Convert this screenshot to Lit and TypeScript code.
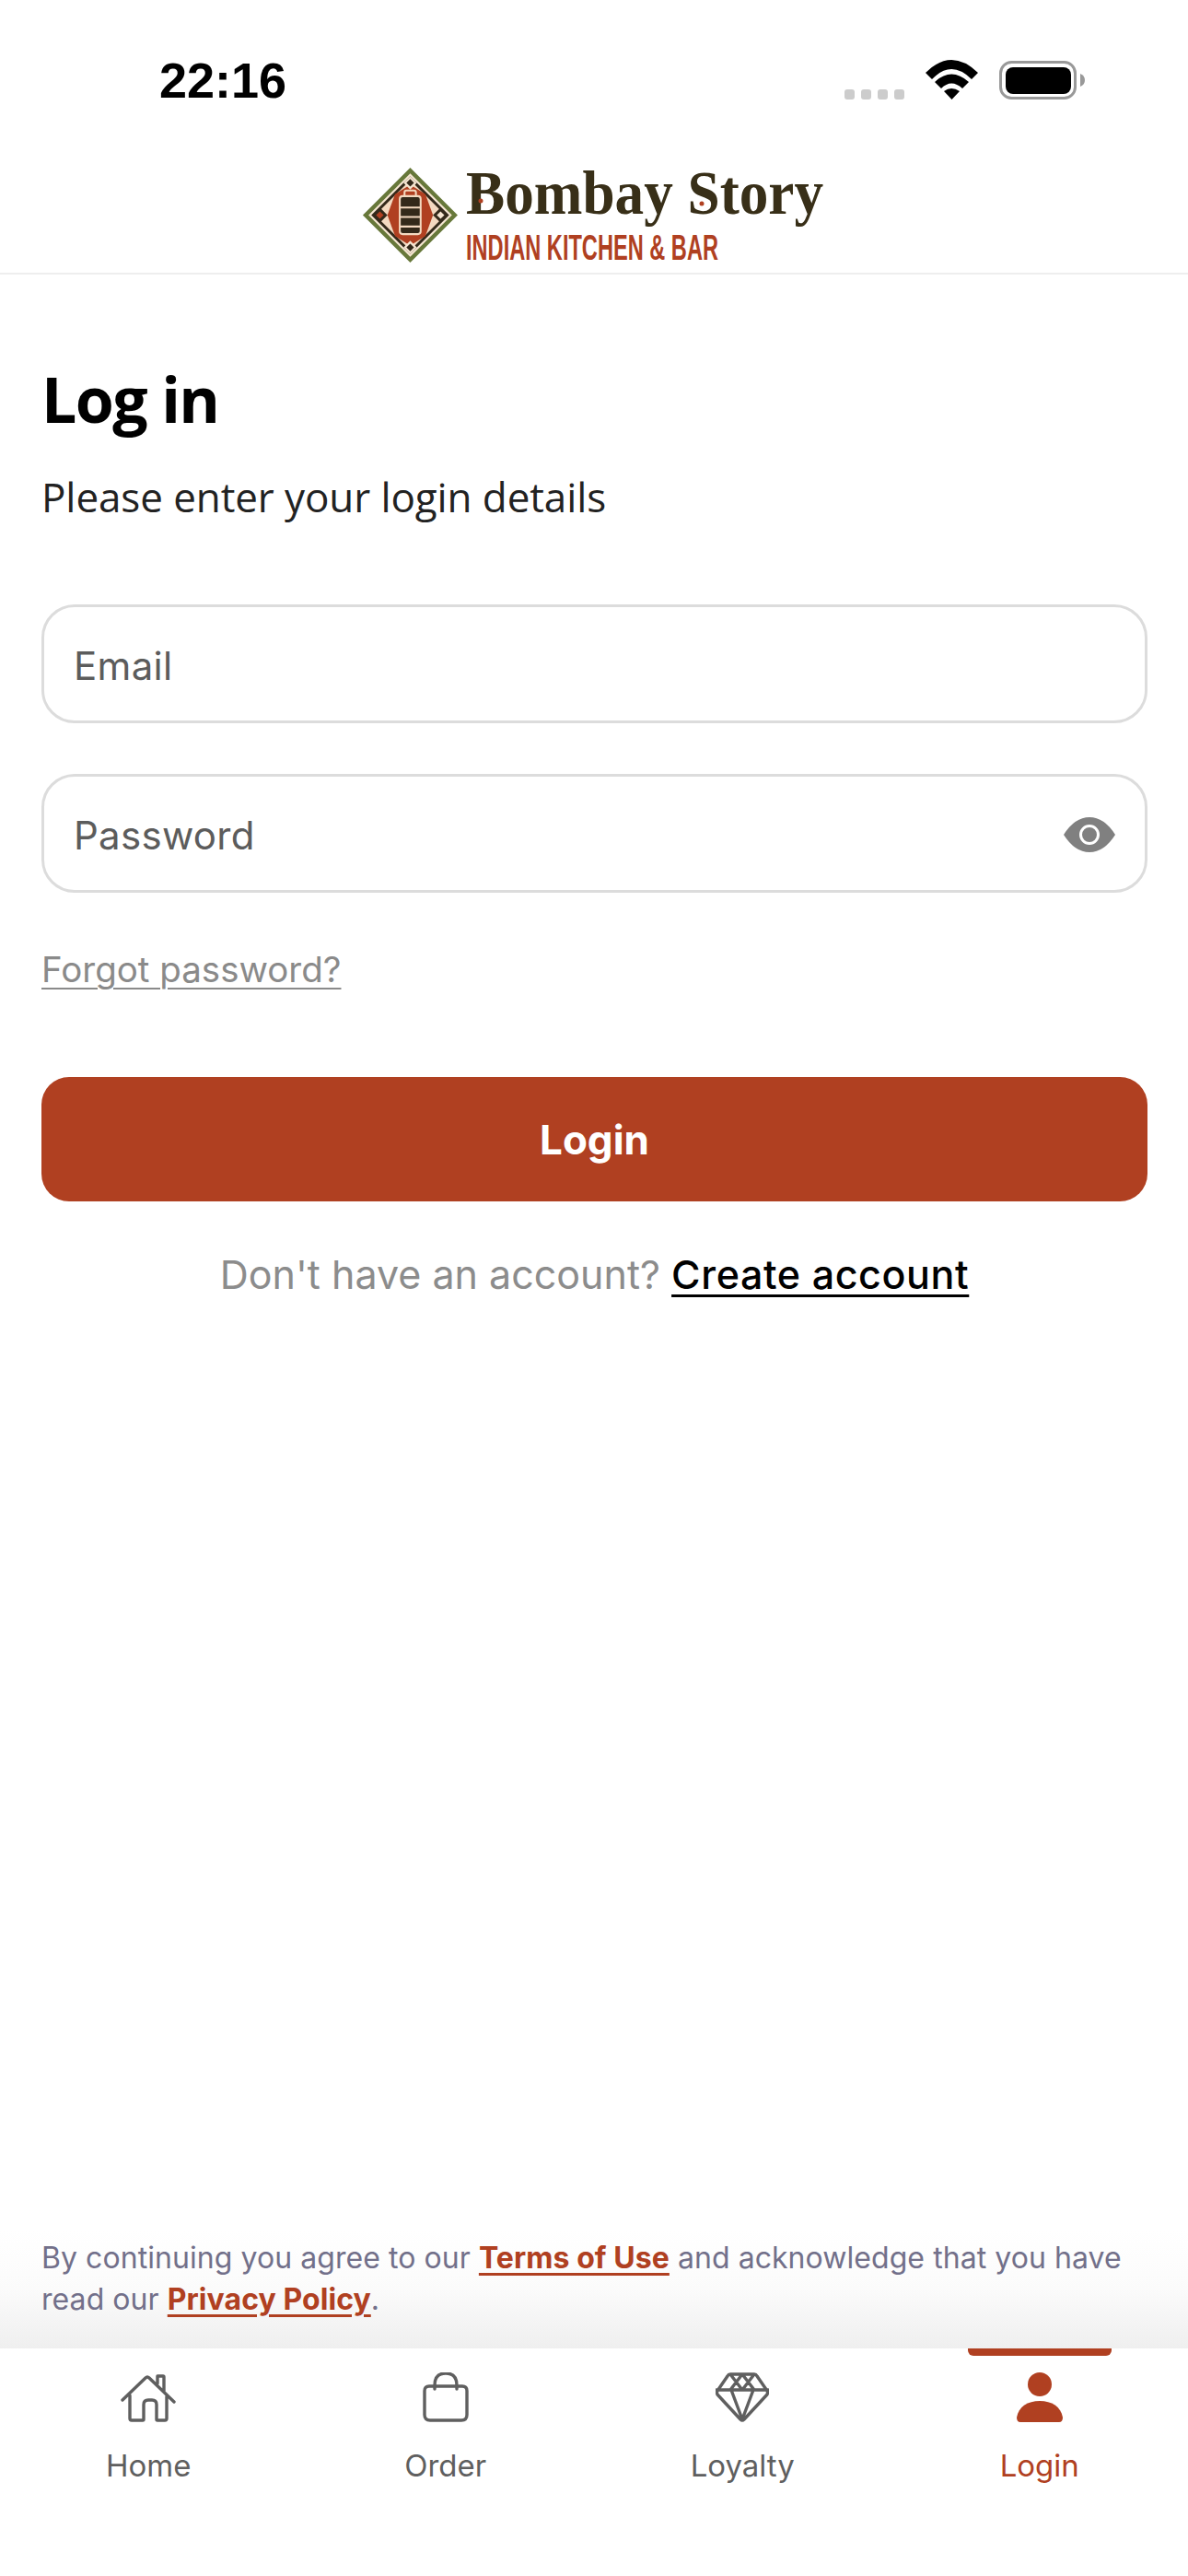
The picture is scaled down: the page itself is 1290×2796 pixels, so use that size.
import { LitElement, html, css, svg } from 'lit';
import { customElement } from 'lit/decorators.js';

const diamond = (r: number, fill: string, cx = 48, cy = 50) =>
  svg`<polygon points="${cx},${cy - r} ${cx + r},${cy} ${cx},${cy + r} ${cx - r},${cy}" fill="${fill}" />`;

const navIcons = {
  home: svg`<path d="M2 30 27 6q2-2 4 0l27 26M10 25v25q0 2 2 2h12q1 0 1-1V35q0-5 5-5h4q5 0 5 5v16q0 1 1 1h8q2 0 2-2V26M40 12V4h6q1 0 1 1v15" />`,
  bag: svg`<path d="M8 15h36q5 0 5 5v26q0 6-6 6H9q-6 0-6-6V20q0-5 5-5ZM14 18v-4Q14 1 26 1t12 13v4" />`,
  gem: svg`<path d="M16 2h26q2 0 3 2l11 16q1 2 0 4L31 51q-2 2-4 0L2 24q-1-2 0-4L13 4q1-2 3-2ZM1 19h56M17 19l12 32 12-32M16 2l13 17L42 2M29 2 16 19M29 2l13 17" />`,
};

@customElement('app-root')
export class AppRoot extends LitElement {
  static styles = css`
    :host {
      display: flex;
      flex-direction: column;
      width: 1290px;
      height: 2796px;
      background: #fff;
      font-family: Inter, 'Noto Sans', sans-serif;
      color: #000;
    }

    .status {
      height: 160px;
      flex: none;
      display: flex;
      justify-content: space-between;
      align-items: flex-start;
      padding: 55px 112px 0 173px;
      box-sizing: border-box;
    }

    .time {
      font: 700 54px/64px 'Liberation Sans', sans-serif;
    }

    .status-icons {
      margin-top: 10px;
      display: block;
    }

    .brand {
      height: 138px;
      flex: none;
      box-sizing: border-box;
      border-bottom: 2px solid #eeeeee;
    }

    .brand svg {
      display: block;
    }

    main {
      flex: 1;
      display: flex;
      flex-direction: column;
      padding: 0 44px 0 45px;
    }

    h1 {
      margin: 95px 0 0;
      font: 700 68px/80px 'Open Sans', sans-serif;
      letter-spacing: -1.6px;
    }

    .lead {
      margin: 38px 0 0;
      font: 400 44px/56px 'Open Sans', sans-serif;
      letter-spacing: -0.1px;
      color: #222;
    }

    .fields {
      margin-top: 89px;
      display: flex;
      flex-direction: column;
      gap: 55px;
    }

    .field {
      height: 129px;
      box-sizing: border-box;
      border: 3px solid #dcdcdc;
      border-radius: 36px;
      display: flex;
      justify-content: space-between;
      align-items: center;
      padding: 3px 32px 0;
      font-size: 42px;
      letter-spacing: 0.3px;
      color: #5c5c5c;
    }

    .forgot {
      margin-top: 60px;
      font-size: 38.5px;
      line-height: 46px;
      color: #8a8a8a;
      text-decoration: underline;
      text-underline-offset: 6px;
      text-decoration-thickness: 2px;
    }

    .login {
      margin-top: 94px;
      height: 135px;
      border-radius: 30px;
      background: #b04021;
      color: #fff;
      display: flex;
      align-items: center;
      justify-content: center;
      font-size: 44px;
      font-weight: 700;
    }

    .signup {
      margin-top: 50px;
      text-align: center;
      font-size: 43px;
      line-height: 58px;
      color: #8c8c8c;
    }

    .signup a {
      color: #000;
      font-weight: 500;
      letter-spacing: 0.6px;
      text-decoration: underline;
      text-underline-offset: 6px;
      text-decoration-thickness: 3px;
    }

    .terms {
      height: 129px;
      flex: none;
      box-sizing: border-box;
      padding: 8px 45px 0;
      background: linear-gradient(#fff 0%, #fbfbfb 50%, #efefef 100%);
      font-size: 32px;
      letter-spacing: 0.06px;
      line-height: 45px;
      color: #72708a;
    }

    .terms a {
      color: #b04021;
      font-weight: 700;
      text-decoration: underline;
      text-underline-offset: 5px;
      text-decoration-thickness: 3px;
    }

    nav {
      height: 247px;
      flex: none;
      display: grid;
      grid-template-columns: repeat(4, 1fr);
    }

    .tab {
      position: relative;
      display: flex;
      flex-direction: column;
      align-items: center;
      padding-top: 26px;
      font-size: 33px;
      line-height: 40px;
      color: #5f5f5f;
    }

    .tab svg {
      display: block;
      height: 54px;
      margin-bottom: 27px;
      fill: none;
      stroke: #5f5f5f;
      stroke-width: 3.4;
      stroke-linecap: round;
      stroke-linejoin: round;
    }

    .tab.active {
      color: #b04021;
    }

    .tab.active svg {
      fill: #b04021;
      stroke: none;
    }

    .tab.active::before {
      content: '';
      position: absolute;
      top: 0;
      left: 50%;
      width: 156px;
      height: 8px;
      margin-left: -78px;
      border-radius: 0 0 6px 6px;
      background: #b04021;
    }
  `;

  private renderStatusIcons() {
    return html`<svg class="status-icons" width="262" height="44" viewBox="915 64 262 44">
      ${[916, 934, 952, 970].map(
        (x) => svg`<rect x="${x}" y="96" width="11" height="11" rx="3" fill="#ccc" />`
      )}
      <path d="M1004 78Q1032 50 1061 78L1054 85Q1032 63 1011 85ZM1014 88Q1032 71 1051 88L1044 95Q1032 84 1021 95ZM1024 98Q1032 92 1041 98L1032.500 107Z" fill="#000" />
      <rect x="1085.500" y="66.500" width="81" height="39" rx="12" fill="none" stroke="#999" stroke-width="3" />
      <rect x="1091" y="72" width="71" height="29" rx="8" fill="#000" />
      <path d="M1172 79q5 2 5 7t-5 7Z" fill="#999" />
    </svg>`;
  }

  // svg spans the whole header so its coordinates are page coordinates
  private renderLogo() {
    return html`<svg width="1290" height="136" viewBox="0 160 1290 136">
      <g transform="translate(396 182) scale(1.03)">
        ${diamond(50, '#67783a')}
        ${diamond(44, '#f6e6d2')}
        ${diamond(41, '#33291a')}
        ${diamond(37, '#f3d9c0')}
        <polygon points="48,18 64,28 72,50 64,72 48,82 32,72 24,50 32,28" fill="#b04021" />
        <g transform="translate(48 16)">${diamond(7, '#f6e6d2', 0, 0)}${diamond(4, '#33291a', 0, 0)}</g>
        <g transform="translate(48 84)">${diamond(7, '#f6e6d2', 0, 0)}${diamond(4, '#33291a', 0, 0)}</g>
        <g transform="translate(16 50)">${diamond(8, '#33291a', 0, 0)}${diamond(4, '#b04021', 0, 0)}</g>
        <g transform="translate(80 50)">${diamond(8, '#33291a', 0, 0)}${diamond(4, '#f6e6d2', 0, 0)}</g>
        <rect x="37" y="30" width="22" height="40" rx="3" fill="#33291a" stroke="#f3d9c0" stroke-width="2" />
        <path d="M37 42h22M37 52h22M37 62h22" stroke="#f3d9c0" stroke-width="2" />
        <path d="M42 30v-4q0-2 2-2h8q2 0 2 2v4" fill="none" stroke="#f3d9c0" stroke-width="2" />
      </g>
      <text x="506" y="232" font-family="'Liberation Serif', serif" font-weight="700" font-size="68" fill="#382f18" textLength="388" lengthAdjust="spacingAndGlyphs">Bombay Story</text>
      <circle cx="522" cy="218" r="2.500" fill="#b04021" />
      <circle cx="762" cy="221" r="2.500" fill="#b04021" />
      <text x="506" y="282" font-family="'Liberation Sans', sans-serif" font-weight="700" font-size="38" fill="#b04021" textLength="274" lengthAdjust="spacingAndGlyphs">INDIAN KITCHEN &amp; BAR</text>
    </svg>`;
  }

  render() {
    return html`
      <div class="status">
        <span class="time">22:16</span>
        ${this.renderStatusIcons()}
      </div>
      <header class="brand">${this.renderLogo()}</header>
      <main>
        <h1>Log in</h1>
        <p class="lead">Please enter your login details</p>
        <div class="fields">
          <div class="field">Email</div>
          <div class="field">
            Password
            <svg width="56" height="38" viewBox="0 0 56 38">
              <path d="M0 19Q12 0 28 0t28 19Q44 38 28 38T0 19Z" fill="#808080" />
              <circle cx="28" cy="19" r="9.500" fill="none" stroke="#fff" stroke-width="3" />
            </svg>
          </div>
        </div>
        <div class="forgot">Forgot password?</div>
        <div class="login">Login</div>
        <div class="signup">Don't have an account? <a>Create account</a></div>
      </main>
      <div class="terms">
        By continuing you agree to our <a>Terms of Use</a> and acknowledge that you have
        read our <a>Privacy Policy</a>.
      </div>
      <nav>
        <div class="tab">
          <svg viewBox="0 0 60 54" width="60">${navIcons.home}</svg>
          Home
        </div>
        <div class="tab">
          <svg viewBox="0 0 52 54" width="52">${navIcons.bag}</svg>
          Order
        </div>
        <div class="tab">
          <svg viewBox="0 0 58 54" width="58">${navIcons.gem}</svg>
          Loyalty
        </div>
        <div class="tab active">
          <svg viewBox="0 0 50 54" width="50">
            <circle cx="25" cy="13" r="13" />
            <path d="M0 49C2 37 12 31 25 31s23 6 25 18q0 5-4 5H4q-4 0-4-5Z" />
          </svg>
          Login
        </div>
      </nav>
    `;
  }
}

declare global {
  interface HTMLElementTagNameMap {
    'app-root': AppRoot;
  }
}
